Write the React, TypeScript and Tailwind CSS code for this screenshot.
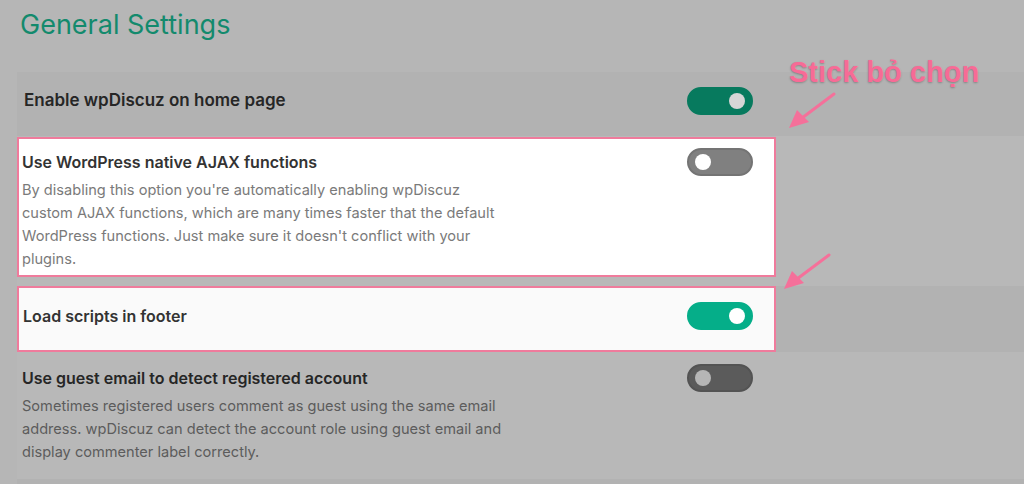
import React from 'react';

const font = { fontFamily: 'Inter, "Liberation Sans", sans-serif' };

const Toggle: React.FC<{ tone: 'onDim' | 'off' | 'on' | 'offDim' }> = ({ tone }) => {
  const track = {
    onDim: 'bg-[#077a5e] border-[#077a5e]',
    off: 'bg-[#808080] border-[#747474]',
    on: 'bg-[#05ae89] border-[#05ae89]',
    offDim: 'bg-[#5b5b5b] border-[#535353]',
  }[tone];
  const knob = {
    onDim: 'bg-[#d6d6d6] ml-auto',
    off: 'bg-white',
    on: 'bg-white ml-auto',
    offDim: 'bg-[#b6b6b6]',
  }[tone];
  return (
    <div className={`flex h-[28px] w-[66px] shrink-0 items-center rounded-full border-2 px-[6px] ${track}`}>
      <div className={`h-[16px] w-[16px] rounded-full ${knob}`} />
    </div>
  );
};

const Label: React.FC<{ children: React.ReactNode; dim?: boolean; big?: boolean }> = ({ children, dim, big }) => (
  <div className={`${big ? 'text-[17px]' : 'text-[16px]'} font-semibold ${dim ? 'text-[#262626]' : 'text-[#333333]'}`}>
    {children}
  </div>
);

// lines are given one by one so the wrap matches the screenshot
const Desc: React.FC<{ lines: string[]; dim?: boolean }> = ({ lines, dim }) => (
  <div className={`text-[14.6px] leading-[23px] ${dim ? 'text-[#5c5c5c]' : 'text-[#7a7a7a]'}`}>
    {lines.map((l) => (
      <div key={l} className="whitespace-nowrap">
        {l}
      </div>
    ))}
  </div>
);

const Arrow: React.FC<{ className: string }> = ({ className }) => (
  <svg className={className} width="50" height="40" viewBox="0 0 50 40" fill="none">
    <line x1="46" y1="3" x2="14" y2="27" stroke="#f5709a" strokeWidth="3" strokeLinecap="round" />
    <polygon points="1,37 9,19 21,31" fill="#f5709a" />
  </svg>
);

export default function App() {
  return (
    <div className="relative h-[484px] overflow-hidden bg-[#b6b6b6]" style={font}>
      <h1 className="h-[72px] pl-[20px] pt-[5px] text-[27px] font-normal text-[#138a6d]">General Settings</h1>

      <div className="pl-[17px]">
        {/* row 1 */}
        <div className="flex h-[64px] bg-[#b2b2b2]">
          <div className="flex h-[43px] w-[759px] items-end justify-between pl-[7px] pr-[23px]">
            <div className="flex h-[28px] w-full items-center justify-between">
              <Label dim big>Enable wpDiscuz on home page</Label>
              <Toggle tone="onDim" />
            </div>
          </div>
        </div>

        {/* row 2 */}
        <div className="h-[150px] bg-[#b8b8b8] pt-[1px]">
          <div className="h-[140px] w-[759px] border-2 border-[#ef7b9c] bg-white pl-[3px] pr-[21px] pt-[9px]">
            <div className="flex h-[28px] items-center justify-between">
              <Label>Use WordPress native AJAX functions</Label>
              <Toggle tone="off" />
            </div>
            <div className="mt-[3px]">
              <Desc
                lines={[
                  "By disabling this option you're automatically enabling wpDiscuz",
                  'custom AJAX functions, which are many times faster that the default',
                  "WordPress functions. Just make sure it doesn't conflict with your",
                  'plugins.',
                ]}
              />
            </div>
          </div>
        </div>

        {/* row 3 */}
        <div className="h-[66px] bg-[#b2b2b2]">
          <div className="h-[66px] w-[759px] border-2 border-[#ef7b9c] bg-[#fafafa] pl-[4px] pr-[21px] pt-[14px]">
            <div className="flex h-[28px] items-center justify-between">
              <Label>Load scripts in footer</Label>
              <Toggle tone="on" />
            </div>
          </div>
        </div>

        {/* row 4 */}
        <div className="h-[127px] bg-[#b8b8b8] pt-[12px]">
          <div className="w-[759px] pl-[5px] pr-[23px]">
            <div className="flex h-[28px] items-center justify-between">
              <Label dim>Use guest email to detect registered account</Label>
              <Toggle tone="offDim" />
            </div>
            <div className="mt-[3px]">
              <Desc
                dim
                lines={[
                  'Sometimes registered users comment as guest using the same email',
                  'address. wpDiscuz can detect the account role using guest email and',
                  'display commenter label correctly.',
                ]}
              />
            </div>
          </div>
        </div>

        {/* row 5 */}
        <div className="h-[40px] bg-[#b2b2b2]" />
      </div>

      {/* annotation */}
      <div
        className="absolute left-[789px] top-[51px] text-[29px] font-bold text-[#f76b96] [text-shadow:0_1px_2px_rgba(0,0,0,0.25)]"
        style={{ fontFamily: '"Liberation Sans", Arial, sans-serif' }}
      >
        Stick bỏ chọn
      </div>
      <Arrow className="absolute left-[788px] top-[91px]" />
      <Arrow className="absolute left-[783px] top-[252px]" />
    </div>
  );
}
